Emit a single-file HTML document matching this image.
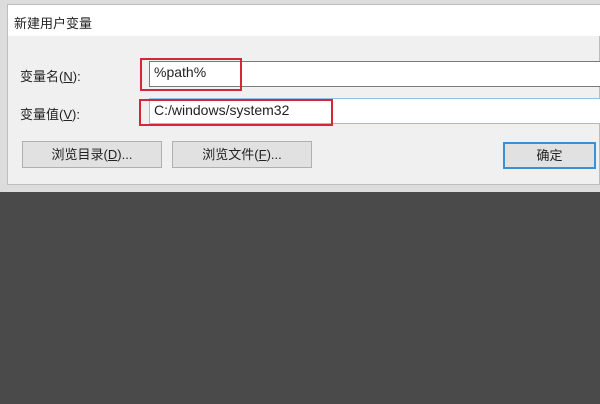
<!DOCTYPE html><html><head><meta charset="utf-8"><style>
body{margin:0;width:600px;height:404px;background:#4a4a4a;position:relative;overflow:hidden;font-family:"Liberation Sans","Noto Sans CJK SC",sans-serif;}
.a{position:absolute}
.f{font-size:13px;color:#222}
</style></head><body>
<div class="a" style="left:0;top:0;width:600px;height:192px;background:#dcdcdc"></div>
<div class="a" style="left:7px;top:4px;width:593px;height:181px;background:#f0f0f0;border:1px solid #bdbdbd;box-sizing:border-box"></div>
<div class="a" style="left:8px;top:5px;width:592px;height:31px;background:#fff"></div>
<div class="a f" style="left:14px;top:13px">新建用户变量</div>
<div class="a f" style="left:20px;top:66px">变量名(<u>N</u>):</div>
<div class="a f" style="left:20px;top:104px">变量值(<u>V</u>):</div>
<div class="a" style="left:149px;top:61px;width:460px;height:24px;background:#fff;border:1px solid #7a7a7a"></div>
<div class="a" style="left:149px;top:98px;width:460px;height:24px;background:#fff;border:1px solid #8fc3e6"></div>
<div class="a f" style="left:154px;top:64px;font-size:14px">%path%</div>
<div class="a f" style="left:154px;top:102px;font-size:14px">C:/windows/system32</div>
<div class="a" style="left:140px;top:58px;width:102px;height:33px;border:2px solid #d4283a;box-sizing:border-box"></div>
<div class="a" style="left:139px;top:99px;width:194px;height:27px;border:2px solid #d4283a;box-sizing:border-box"></div>
<div class="a f" style="left:22px;top:141px;width:140px;height:27px;background:#e1e1e1;border:1px solid #b0b0b0;box-sizing:border-box;text-align:center;line-height:25px">浏览目录(<u>D</u>)...</div>
<div class="a f" style="left:172px;top:141px;width:140px;height:27px;background:#e1e1e1;border:1px solid #b0b0b0;box-sizing:border-box;text-align:center;line-height:25px">浏览文件(<u>F</u>)...</div>
<div class="a f" style="left:503px;top:142px;width:93px;height:27px;background:#e1e1e1;border:2px solid #3c8fd0;box-sizing:border-box;text-align:center;line-height:23px">确定</div>
</body></html>
